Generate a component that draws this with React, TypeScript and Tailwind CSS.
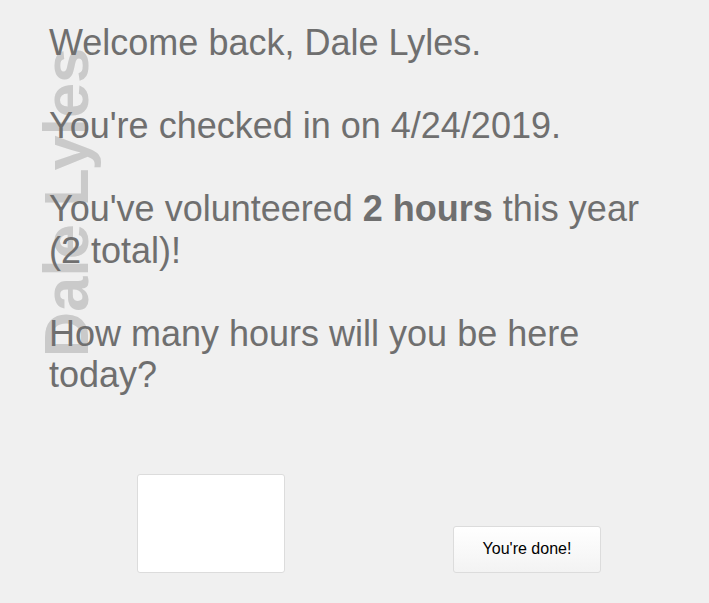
export default function App() {
  return (
    <div className="relative min-h-[603px] w-full overflow-hidden bg-[#f0f0f0] font-['Liberation_Sans',Arial,sans-serif]">
      {/* name watermark, sits behind the copy */}
      <div className="absolute left-[35px] top-[48px] rotate-180 text-[63px] font-bold leading-[63px] text-[#cacaca] select-none [writing-mode:vertical-rl]">
        Dale Lyles
      </div>

      <div className="relative pt-[22px] pl-[49px] pr-[40px] text-[36px] leading-[41.5px] text-[#6f6f6f] flex flex-col gap-[41.5px]">
        <p>Welcome back, Dale Lyles.</p>
        <p>You're checked in on 4/24/2019.</p>
        <p>
          You've volunteered <b className="font-bold">2 hours</b> this year (2 total)!
        </p>
        <p>How many hours will you be here today?</p>
      </div>

      <div className="relative mt-[78px] flex items-end gap-[168px] pl-[137px]">
        <textarea className="h-[99px] w-[148px] resize-none rounded-[3px] border border-[#dcdcdc] bg-white outline-none" />
        <button className="h-[47px] w-[148px] rounded-[3px] border border-[#dcdcdc] bg-gradient-to-b from-white to-[#f3f3f3] text-[16px] text-black">
          You're done!
        </button>
      </div>
    </div>
  )
}
